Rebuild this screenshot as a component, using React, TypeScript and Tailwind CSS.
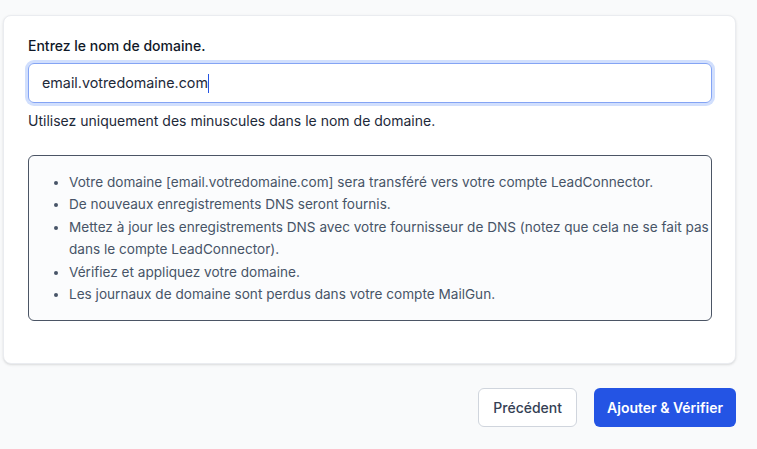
import React from 'react';

const steps = [
    'Votre domaine [email.votredomaine.com] sera transféré vers votre compte LeadConnector.',
    'De nouveaux enregistrements DNS seront fournis.',
    'Mettez à jour les enregistrements DNS avec votre fournisseur de DNS (notez que cela ne se fait pas dans le compte LeadConnector).',
    'Vérifiez et appliquez votre domaine.',
    'Les journaux de domaine sont perdus dans votre compte MailGun.',
];

export default function App() {
    return (
        <div className="min-h-screen bg-[#f9fafb] pt-[15px] pl-[3px] font-['Inter',sans-serif]">
            <div className="w-[733px] bg-white border border-[#eaecf0] rounded-lg shadow-sm pl-[24px] pr-[23px] pt-[20px] pb-[42px]">
                <label className="block text-sm font-medium text-[#101828] leading-5 mb-[7px]">Entrez le nom de domaine.</label>
                <div className="h-[40px] border border-[#84a4f4] rounded-md ring-[3px] ring-[#d1dffd] flex items-center px-[13px]">
                    <span className="text-[14.3px] text-[#1d2939]">email.votredomaine.com</span>
                    <span className="w-px h-[19px] bg-[#2454e4]"></span>
                </div>
                <p className="mt-2 text-sm text-[#1d2939] leading-5">Utilisez uniquement des minuscules dans le nom de domaine.</p>
                <div className="mt-6 border border-[#4b5565] rounded-md bg-[#fbfcfd] pl-[16px] pt-[15px] pb-[15px]">
                    <ul className="list-disc pl-[24px] text-[13.6px] leading-[22.4px] text-[#475467]">
                        {steps.map((s, i) => (
                            <li key={i}>{s}</li>
                        ))}
                    </ul>
                </div>
            </div>
            <div className="w-[733px] flex justify-end gap-[17px] mt-[24px]">
                <button className="h-[39px] px-[14px] bg-white border border-[#d0d5dd] rounded-md text-sm font-medium text-[#344054]">Précédent</button>
                <button className="h-[39px] px-[13px] bg-[#2454e4] rounded-md text-sm font-semibold text-white">Ajouter &amp; Vérifier</button>
            </div>
        </div>
    );
}
